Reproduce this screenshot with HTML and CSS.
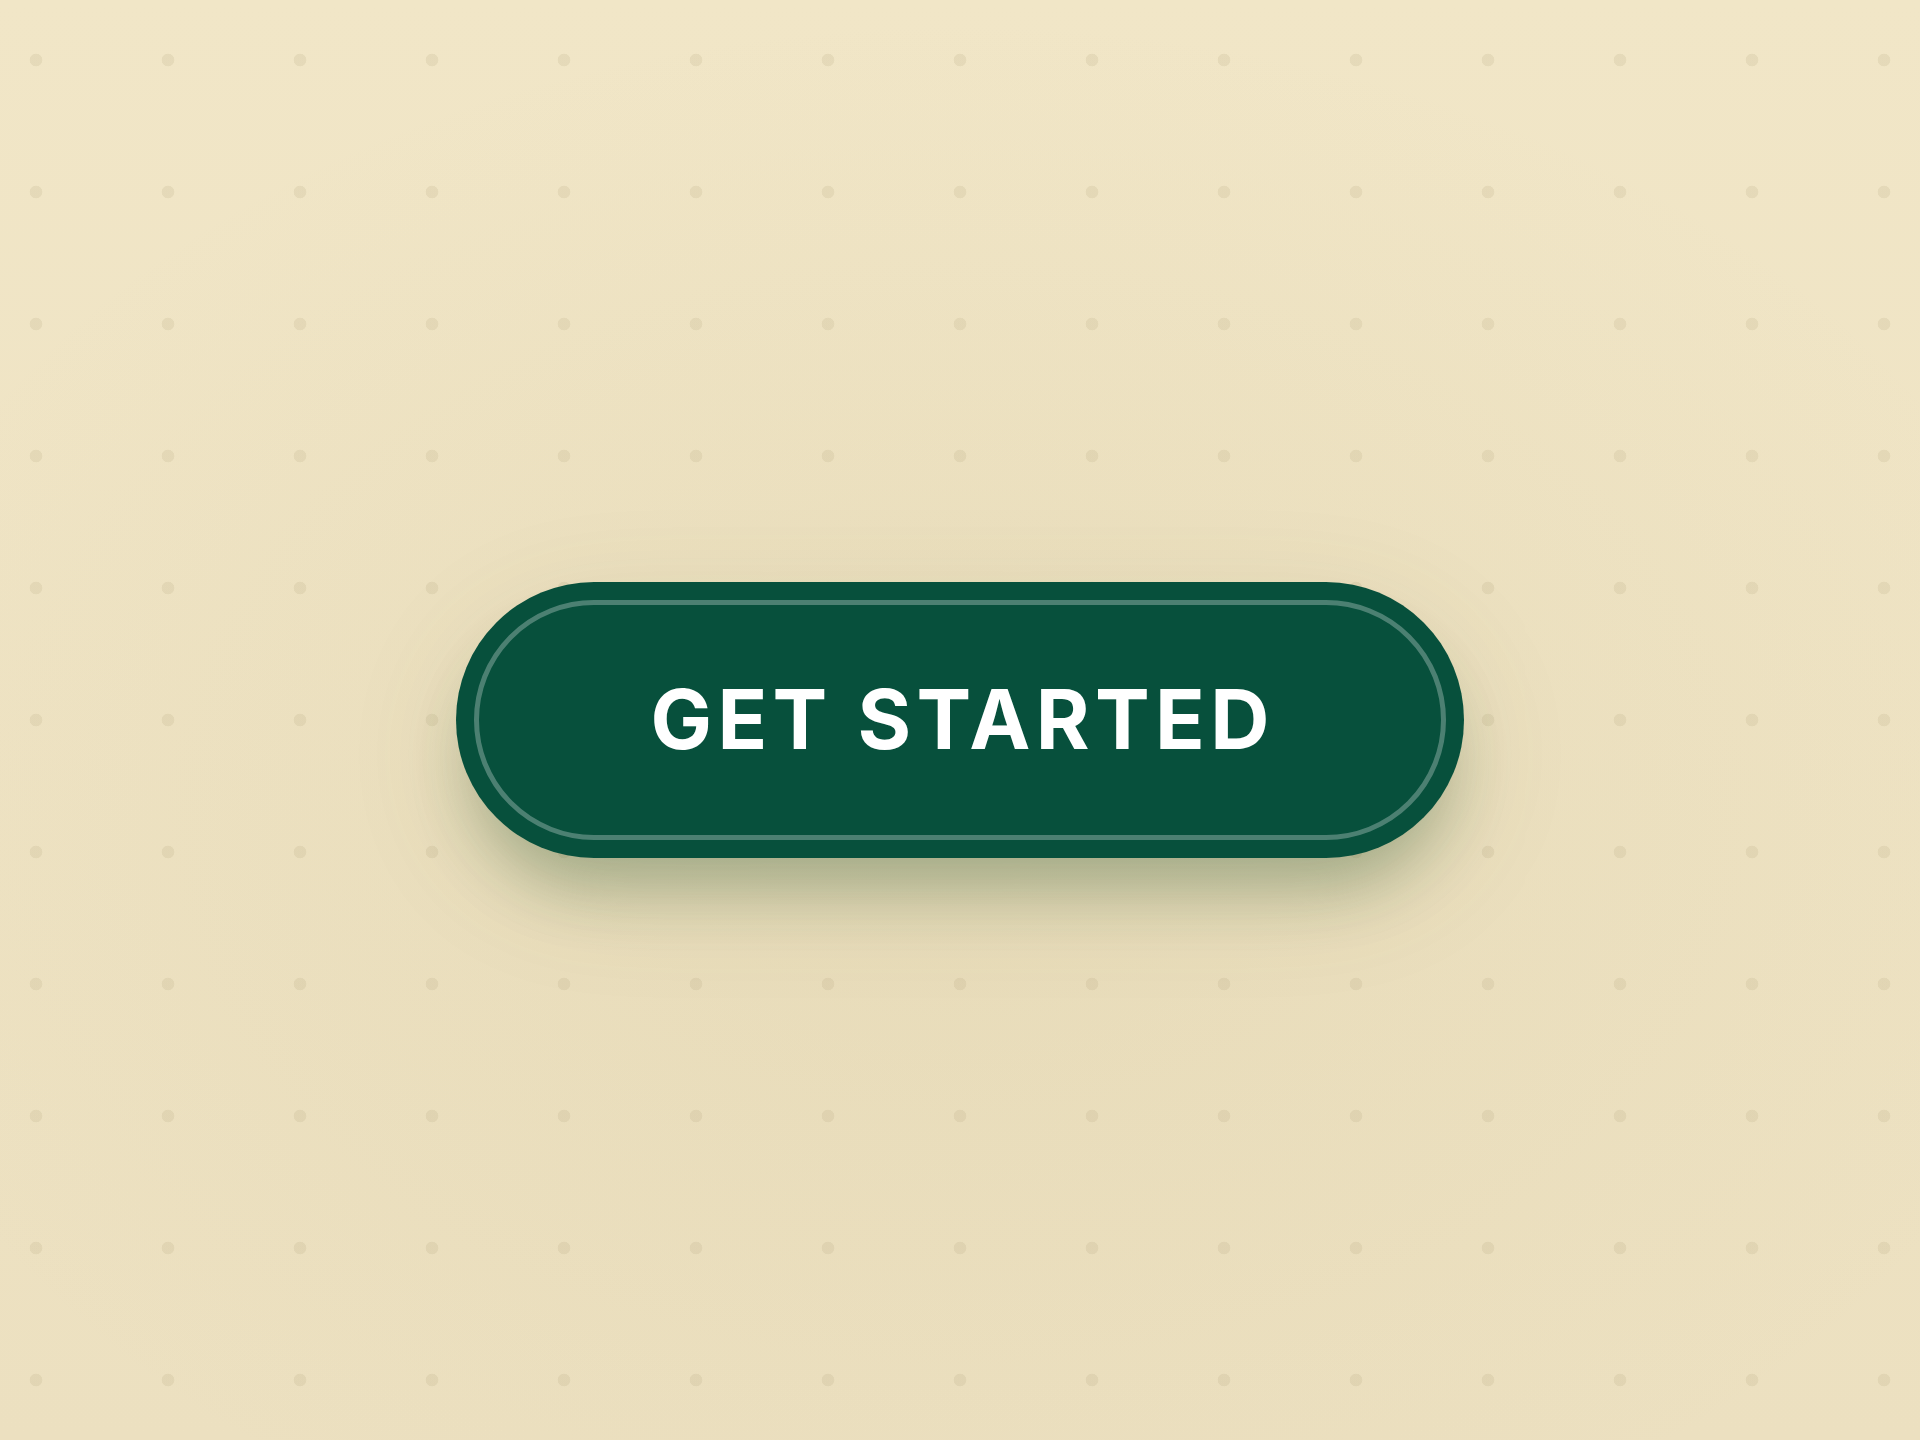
FILE: index.html
```html
<!DOCTYPE html>
<html lang="en">
<head>
<meta charset="utf-8">
<title>Get Started</title>
<link rel="stylesheet" href="styles.css">
</head>
<body>
  <main class="stage">
    <button class="cta" type="button"><span class="cta-label">GET STARTED</span></button>
  </main>
</body>
</html>
```
FILE: styles.css
```css
html, body {
  margin: 0;
  padding: 0;
}

body {
  min-height: 100vh;
  font-family: "Inter", "Liberation Sans", sans-serif;
  background-color: #eee2c2;
  background-image:
    radial-gradient(circle, rgba(170, 155, 115, 0.16) 0 6px, transparent 6.6px),
    radial-gradient(ellipse 60% 56% at 50% 57%, rgba(185, 170, 115, 0.12), rgba(185, 170, 115, 0) 100%),
    linear-gradient(180deg, #f1e6c7 0%, #ece0c0 100%);
  background-size: 132px 132px, 100% 100%, 100% 100%;
  background-position: -30px -6px, 0 0, 0 0;
}

.stage {
  min-height: 100vh;
  display: grid;
  place-items: center;
}

.cta {
  position: relative;
  width: 1008px;
  height: 276px;
  border: 0;
  border-radius: 138px;
  background: #07503c;
  color: #ffffff;
  cursor: pointer;
  display: flex;
  align-items: center;
  justify-content: center;
  padding: 0;
  box-shadow:
    0 46px 60px -16px rgba(40, 85, 50, 0.3),
    0 34px 120px 0 rgba(90, 100, 50, 0.12);
}

/* inner hairline ring */
.cta::before {
  content: "";
  position: absolute;
  inset: 18px;
  border: 5px solid rgba(255, 255, 255, 0.28);
  border-radius: 999px;
  pointer-events: none;
}

.cta-label {
  font-family: "Inter", "Liberation Sans", sans-serif;
  font-weight: 700;
  font-size: 82px;
  line-height: 1;
  letter-spacing: 0.065em;
  margin-right: -0.065em;
  white-space: nowrap;
}
```
